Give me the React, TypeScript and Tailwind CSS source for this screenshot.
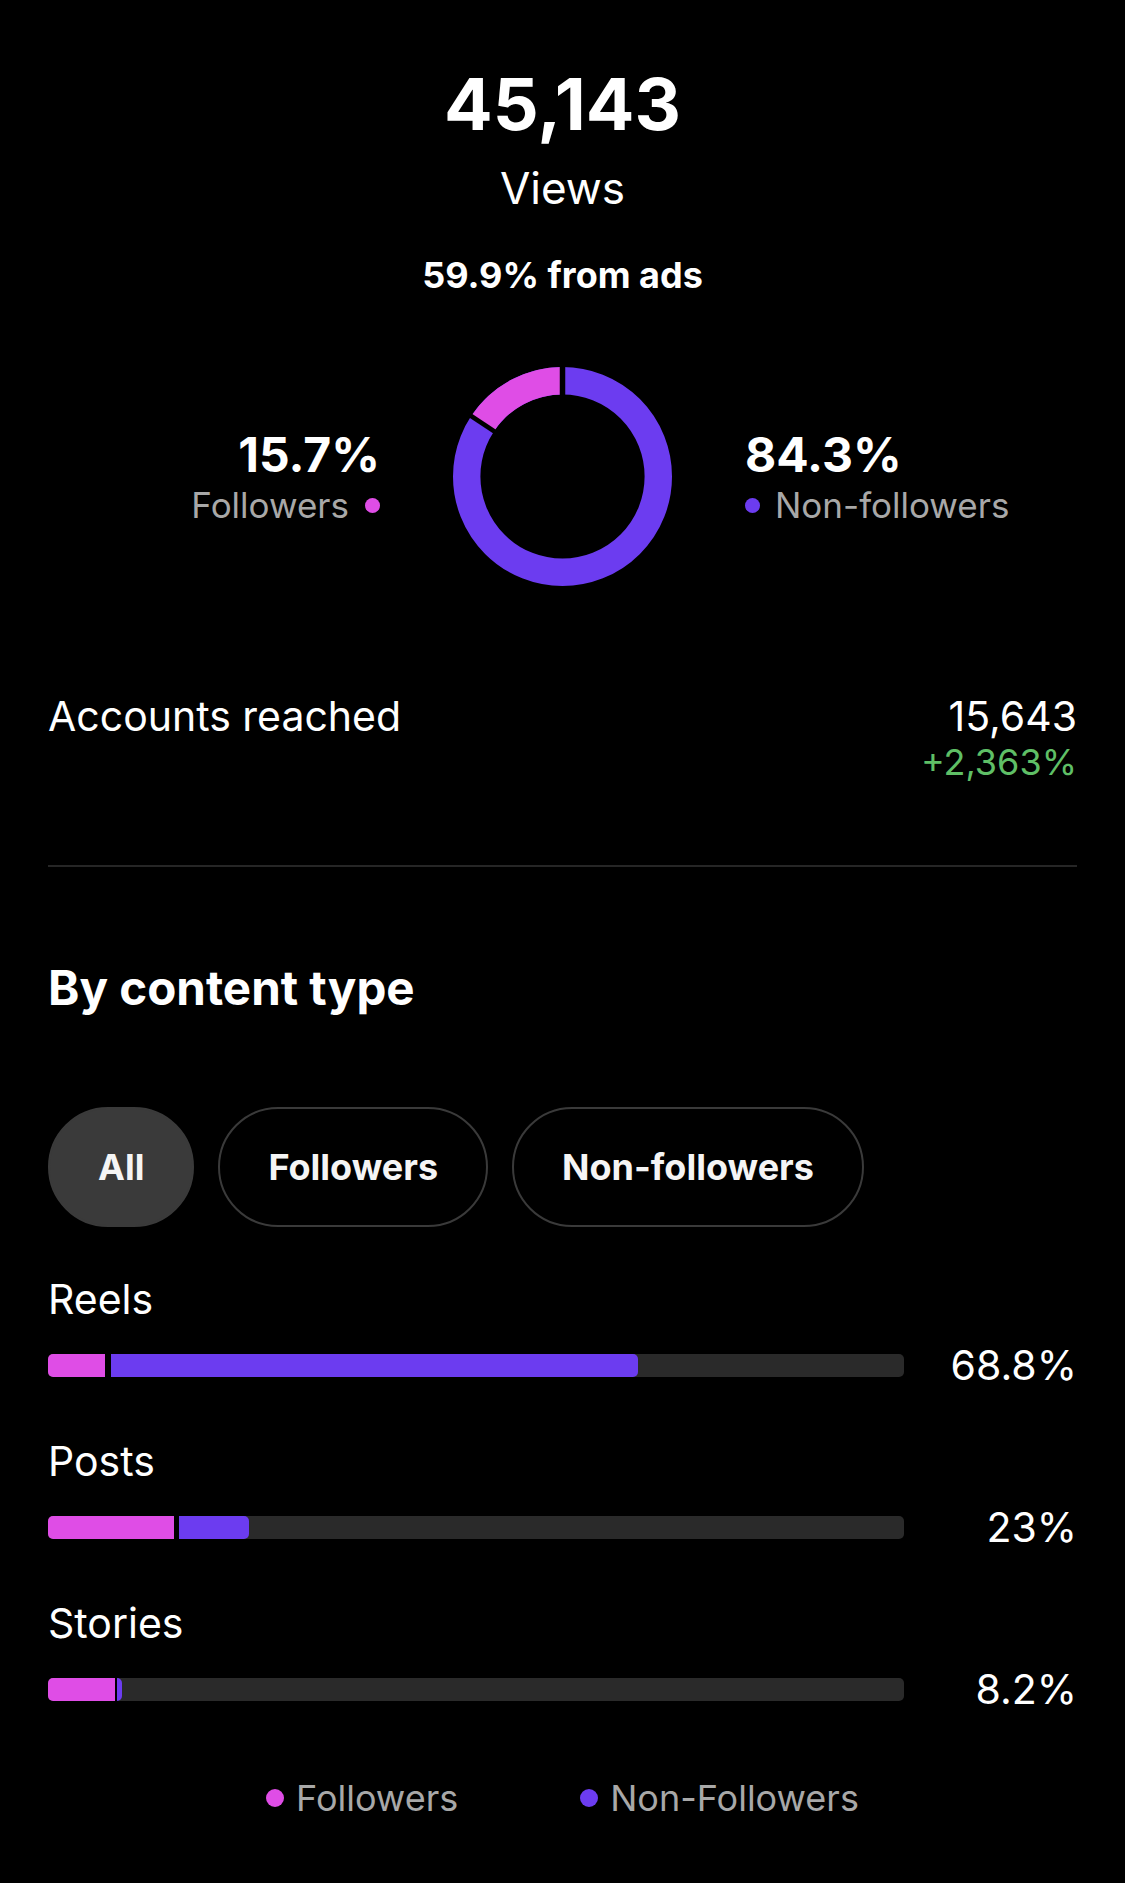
const CONTENT = [
  { label: "Reels", value: "68.8%", followers: 57, gap: 6, nonFollowers: 527 },
  { label: "Posts", value: "23%", followers: 126, gap: 5, nonFollowers: 70 },
  { label: "Stories", value: "8.2%", followers: 67, gap: 2, nonFollowers: 5 },
];

function Donut() {
  return (
    <svg width="219" height="219" viewBox="0 0 219 219">
      <circle cx="109.5" cy="109.5" r="95.8" fill="none" stroke="#6c3cf0" strokeWidth="27.4" />
      <path
        d="M 29.61 56.63 A 95.8 95.8 0 0 1 109.5 13.7"
        fill="none"
        stroke="#df4de6"
        strokeWidth="27.4"
      />
      <line x1="109.5" y1="109.5" x2="109.5" y2="0" stroke="#000" strokeWidth="5.5" />
      <line x1="109.5" y1="109.5" x2="13.6" y2="46" stroke="#000" strokeWidth="4.5" />
    </svg>
  );
}

function Pill({ label, active }: { label: string; active?: boolean }) {
  return (
    <div
      className={
        active
          ? "flex h-[120px] items-center rounded-full border-2 border-[#3a3a3a] bg-[#3a3a3a] px-[48px] text-[36px] font-bold leading-none text-[#f5f5f5]"
          : "flex h-[120px] items-center rounded-full border-2 border-[#3a3a3a] px-[48px] text-[36px] font-bold leading-none text-[#f5f5f5]"
      }
    >
      {label}
    </div>
  );
}

export default function App() {
  return (
    <div className="min-h-[1883px] w-full bg-black pb-10 font-['Inter',sans-serif] text-white">
      <div className="flex flex-col items-center">
        <div className="mt-[68px] text-[72px] font-bold leading-none">45,143</div>
        <div className="mt-[26px] text-[44px] leading-none">Views</div>
        <div className="mt-[47px] text-[36px] font-bold leading-none">59.9% from ads</div>
      </div>

      <div className="mt-[74px] grid grid-cols-[1fr_auto_1fr] items-center gap-x-[73px]">
        <div className="flex flex-col items-end">
          <span className="text-[48px] font-bold leading-none">15.7%</span>
          <span className="mt-[9px] flex items-center gap-[16px] text-[35px] leading-none text-[#a8a8a8]">
            Followers
            <span className="size-[15px] rounded-full bg-[#df4de6]" />
          </span>
        </div>
        <Donut />
        <div className="flex flex-col items-start">
          <span className="text-[48px] font-bold leading-none">84.3%</span>
          <span className="mt-[9px] flex items-center gap-[15px] text-[35px] leading-none text-[#a8a8a8]">
            <span className="size-[15px] rounded-full bg-[#6c3cf0]" />
            Non-followers
          </span>
        </div>
      </div>

      <div className="mt-[110px] px-12">
        <div className="flex items-start justify-between">
          <span className="text-[41px] leading-none">Accounts reached</span>
          <div className="flex flex-col items-end">
            <span className="text-[41px] leading-none">15,643</span>
            <span className="mt-[7px] text-[36px] leading-none text-[#5fbf66]">+2,363%</span>
          </div>
        </div>

        <div className="mt-[85px] h-[2px] bg-[#262626]" />

        <h2 className="mt-[97px] text-[47.5px] font-bold leading-none">By content type</h2>

        <div className="mt-[95px] flex gap-6">
          <Pill label="All" active />
          <Pill label="Followers" />
          <Pill label="Non-followers" />
        </div>

        <div className="mt-[52px] flex flex-col gap-[55px]">
          {CONTENT.map((row) => (
            <div key={row.label}>
              <div className="text-[41px] leading-none">{row.label}</div>
              <div className="mt-[25px] flex items-center">
                <div className="flex h-[23px] w-[856px] overflow-hidden rounded-[5px] bg-[#2a2a2a]">
                  <div className="h-full bg-[#df4de6]" style={{ width: row.followers }} />
                  <div className="h-full bg-black" style={{ width: row.gap }} />
                  <div className="h-full rounded-r-[5px] bg-[#6c3cf0]" style={{ width: row.nonFollowers }} />
                </div>
                <span className="ml-auto text-[41px] leading-none">{row.value}</span>
              </div>
            </div>
          ))}
        </div>

        <div className="mt-[70px] flex justify-center gap-[122px] text-[36px] leading-none text-[#a8a8a8]">
          <span className="flex items-center gap-3">
            <span className="size-[18px] rounded-full bg-[#df4de6]" />
            Followers
          </span>
          <span className="flex items-center gap-3">
            <span className="size-[18px] rounded-full bg-[#6c3cf0]" />
            Non-Followers
          </span>
        </div>
      </div>
    </div>
  );
}
